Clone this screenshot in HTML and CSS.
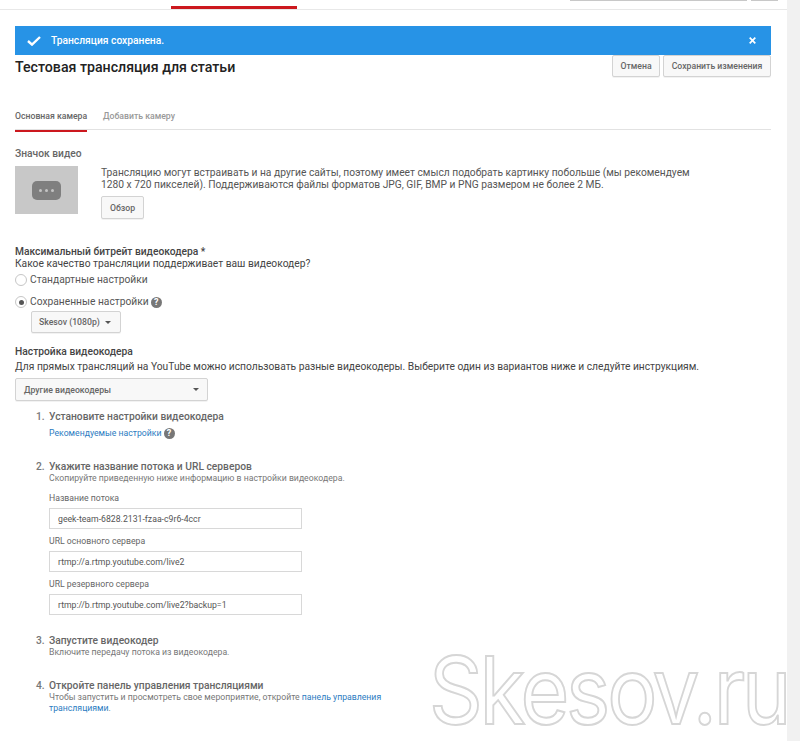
FILE: index.html
```html
<!DOCTYPE html>
<html lang="en">
<head>
    <meta charset="UTF-8">
    <meta name="viewport" content="width=device-width, initial-scale=1.0">
    <title>Трансляция</title>
    <link rel="stylesheet" href="styles.css">
</head>
<body>
    <div class="page">
        <header class="topbar">
            <div class="topbar-tab"></div>
            <div class="topbar-input"></div>
            <div class="topbar-btn"></div>
        </header>

        <main class="content">
            <div class="alert">
                <svg class="alert-check" width="14" height="10" viewBox="0 0 14 10"><path d="M1 5l4 3.6L13 1" fill="none" stroke="#fff" stroke-width="2.4"/></svg>
                <span class="alert-text">Трансляция сохранена.</span>
                <svg class="alert-close" width="7" height="7" viewBox="0 0 7 7"><path d="M.7.7l5.6 5.6M6.3.7L.7 6.3" fill="none" stroke="#fff" stroke-width="1.7"/></svg>
            </div>

            <div class="title-row">
                <h1>Тестовая трансляция для статьи</h1>
                <div class="title-actions">
                    <button class="btn btn-cancel" type="button">Отмена</button>
                    <button class="btn btn-save" type="button">Сохранить изменения</button>
                </div>
            </div>

            <nav class="tabs">
                <a class="tab tab-active">Основная камера</a>
                <a class="tab">Добавить камеру</a>
            </nav>

            <h2 class="thumb-title">Значок видео</h2>
            <div class="thumb-row">
                <div class="thumb">
                    <div class="thumb-icon"><i></i><i></i><i></i></div>
                </div>
                <div class="thumb-info">
                    <p>Трансляцию могут встраивать и на другие сайты, поэтому имеет смысл подобрать картинку побольше (мы рекомендуем 1280 x 720 пикселей). Поддерживаются файлы форматов JPG, GIF, BMP и PNG размером не более 2 МБ.</p>
                    <button class="btn btn-browse" type="button">Обзор</button>
                </div>
            </div>

            <h2 class="bitrate-title">Максимальный битрейт видеокодера *</h2>
            <p class="plain">Какое качество трансляции поддерживает ваш видеокодер?</p>
            <div class="radio-row radio-first"><span class="radio"></span>Стандартные настройки</div>
            <div class="radio-row radio-second"><span class="radio radio-on"></span>Сохраненные настройки<span class="help">?</span></div>
            <button class="btn btn-select btn-preset" type="button">Skesov (1080p)<span class="caret"></span></button>

            <h2 class="encoder-title">Настройка видеокодера</h2>
            <p class="plain">Для прямых трансляций на YouTube можно использовать разные видеокодеры. Выберите один из вариантов ниже и следуйте инструкциям.</p>
            <button class="btn btn-select btn-encoder" type="button">Другие видеокодеры<span class="caret"></span></button>

            <ol class="steps">
                <li class="step step-1">
                    <h3>Установите настройки видеокодера</h3>
                    <p><a class="link">Рекомендуемые настройки</a><span class="help">?</span></p>
                </li>
                <li class="step step-2">
                    <h3>Укажите название потока и URL серверов</h3>
                    <p>Скопируйте приведенную ниже информацию в настройки видеокодера.</p>
                    <label class="field-label field-first">Название потока</label>
                    <input class="field" type="text" value="geek-team-6828.2131-fzaa-c9r6-4ccr">
                    <label class="field-label">URL основного сервера</label>
                    <input class="field" type="text" value="rtmp://a.rtmp.youtube.com/live2">
                    <label class="field-label">URL резервного сервера</label>
                    <input class="field" type="text" value="rtmp://b.rtmp.youtube.com/live2?backup=1">
                </li>
                <li class="step step-3">
                    <h3>Запустите видеокодер</h3>
                    <p>Включите передачу потока из видеокодера.</p>
                </li>
                <li class="step step-4">
                    <h3>Откройте панель управления трансляциями</h3>
                    <p>Чтобы запустить и просмотреть свое мероприятие, откройте <a class="link">панель управления трансляциями</a>.</p>
                </li>
            </ol>
        </main>

        <div class="gutter"></div>
        <div class="watermark">Skesov.ru</div>
    </div>
</body>
</html>
```

FILE: styles.css
```css
/* Reset */
* {
    margin: 0;
    padding: 0;
    box-sizing: border-box;
}

body {
    font-family: Roboto, 'Liberation Sans', sans-serif;
    font-size: 10.25px;
    line-height: 12px;
    color: #333;
    background: #fff;
    overflow: hidden;
}

.page {
    position: relative;
    width: 800px;
    height: 741px;
    overflow: hidden;
}

/* Top bar */
.topbar {
    height: 10px;
    width: 787px;
    border-bottom: 1px solid #e8e8e8;
    position: relative;
    display: flex;
    padding-left: 171px;
}

.topbar-tab {
    width: 126px;
    height: 3px;
    margin-top: 6px;
    background: #cc181e;
}

.topbar-input {
    width: 177px;
    height: 1px;
    margin-left: 273px;
    background: #c8c8c8;
}

.topbar-btn {
    width: 27px;
    height: 1px;
    margin-left: 4px;
    background: #c8c8c8;
}

.content {
    width: 756px;
    margin-left: 15px;
    padding-top: 16px;
}

/* Alert */
.alert {
    height: 29px;
    background: #2793e6;
    color: #fff;
    display: flex;
    align-items: center;
    padding: 0 15px 0 12px;
}

.alert-text {
    margin-left: 10px;
    font-weight: 500;
    flex: 1;
}

/* Title */
.title-row {
    display: flex;
    justify-content: space-between;
    height: 22px;
}

h1 {
    font-size: 14.2px;
    line-height: 24px;
    font-weight: 500;
    color: #222;
}

.title-actions {
    display: flex;
    gap: 3px;
}

.btn {
    font-family: inherit;
    font-size: 8.7px;
    font-weight: 500;
    color: #666;
    background: #f8f8f8;
    border: 1px solid #d3d3d3;
    border-radius: 2px;
    box-shadow: 0 1px 0 rgba(0, 0, 0, 0.05);
}

.btn-cancel {
    width: 48px;
    height: 22px;
}

.btn-save {
    width: 108px;
    height: 22px;
}

/* Tabs */
.tabs {
    margin-top: 29px;
    height: 24px;
    border-bottom: 1px solid #e2e2e2;
    display: flex;
    gap: 16px;
    font-size: 8.7px;
    font-weight: 500;
    color: #999;
    padding-top: 4px;
}

.tab {
    display: block;
    height: 22px;
    white-space: nowrap;
}

.tab-active {
    color: #666;
    border-bottom: 2px solid #cc181e;
    width: 72px;
}

/* Thumbnail */
h2 {
    font-size: 10.25px;
    line-height: 12px;
    font-weight: 500;
    color: #444;
}

.thumb-title {
    margin-top: 18px;
    color: #666;
}

.thumb-row {
    display: flex;
    margin-top: 6px;
}

.thumb {
    width: 63px;
    height: 48px;
    background: #c8c8c8;
    display: flex;
    align-items: center;
    justify-content: center;
}

.thumb-icon {
    width: 29px;
    height: 19px;
    background: #7f7f7f;
    border-radius: 5px;
    display: flex;
    align-items: center;
    justify-content: center;
    gap: 3px;
}

.thumb-icon i {
    width: 3px;
    height: 3px;
    border-radius: 50%;
    background: #c4c4c4;
}

.thumb-info {
    width: 600px;
    margin-left: 23px;
    padding-top: 1px;
    color: #555;
}

.btn-browse {
    display: block;
    width: 43px;
    height: 23px;
    margin-top: 5px;
}

/* Bitrate */
.bitrate-title {
    margin-top: 27px;
}

.plain {
    color: #444;
}

.radio-row {
    display: flex;
    align-items: center;
    height: 12px;
    color: #555;
}

.radio-first {
    margin-top: 4px;
}

.radio-second {
    margin-top: 10px;
}

.radio {
    width: 12px;
    height: 12px;
    margin-right: 3px;
    border: 1px solid #c6c6c6;
    border-radius: 50%;
    background: #fff;
    position: relative;
}

.radio-on::after {
    content: "";
    position: absolute;
    left: 2.5px;
    top: 2.5px;
    width: 5px;
    height: 5px;
    border-radius: 50%;
    background: #555;
}

.help {
    display: inline-block;
    width: 11px;
    height: 11px;
    margin-left: 2px;
    border-radius: 50%;
    background: #777;
    color: #fff;
    font-size: 9px;
    font-weight: 700;
    line-height: 11px;
    text-align: center;
    vertical-align: top;
}

.btn-select {
    display: flex;
    align-items: center;
    justify-content: space-between;
    height: 22px;
    white-space: nowrap;
}

.btn-preset {
    width: 90px;
    margin: 3px 0 0 16px;
    padding: 0 9px 0 7px;
}

.caret {
    width: 0;
    height: 0;
    border-left: 3.5px solid transparent;
    border-right: 3.5px solid transparent;
    border-top: 3.5px solid #555;
}

/* Encoder */
.encoder-title {
    margin-top: 13px;
}

.encoder-title + .plain {
    margin-top: 3px;
}

.btn-encoder {
    width: 193px;
    height: 23px;
    margin-top: 5px;
    padding: 0 8px;
}

/* Steps */
.steps {
    list-style: none;
    padding-left: 34px;
    counter-reset: step;
    font-size: 8.7px;
    color: #777;
}

.step {
    position: relative;
    width: 336px;
    counter-increment: step;
}

.step::before {
    content: counter(step) ".";
    position: absolute;
    left: -13px;
    top: 0;
    font-size: 10.25px;
    font-weight: 500;
    color: #777;
}

.step h3 {
    font-size: 10.25px;
    line-height: 12px;
    font-weight: 500;
    color: #666;
}

.step p {
    line-height: 11px;
}

.step-1 {
    margin-top: 10px;
}

.step-1 p {
    margin-top: 5px;
}

.step-2 {
    margin-top: 22px;
}

.step-3 {
    margin-top: 20px;
}

.step-4 {
    margin-top: 22px;
}

.link {
    color: #2b7bc1;
}

.field-label {
    display: block;
    margin-top: 6px;
    line-height: 12px;
    color: #666;
}

.field-first {
    margin-top: 8px;
}

.field {
    display: block;
    width: 253px;
    height: 21px;
    margin-top: 4px;
    padding: 0 8px;
    border: 1px solid #d8d8d8;
    font-family: inherit;
    font-size: 8.7px;
    color: #555;
}

/* Page gutter and watermark */
.gutter {
    position: absolute;
    right: 0;
    top: 0;
    width: 13px;
    height: 741px;
    background: #f1f1f1;
}

.watermark {
    position: absolute;
    left: 429px;
    top: 640px;
    font-family: Inter, sans-serif;
    font-size: 93px;
    line-height: 100px;
    letter-spacing: -3.5px;
    white-space: nowrap;
    color: rgba(255, 255, 255, 0.6);
    -webkit-text-stroke: 2px #d6d6d6;
    transform: scaleX(0.9);
    transform-origin: left top;
}
```
